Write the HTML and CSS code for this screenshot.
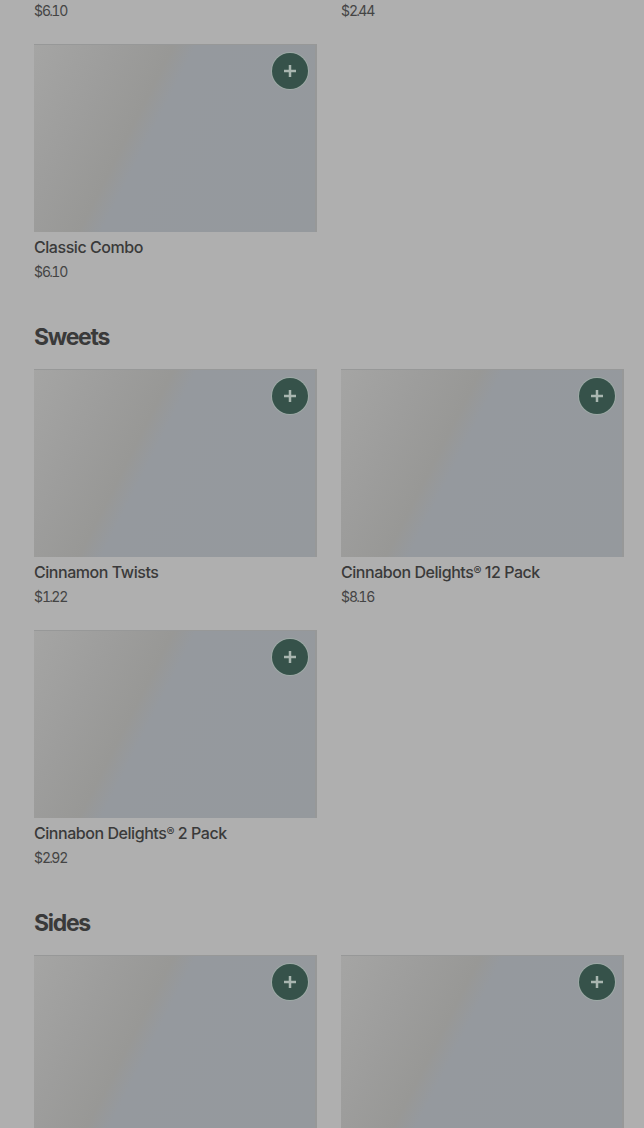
FILE: index.html
```html
<html lang="en">
<head>
  <meta charset="UTF-8" />
  <meta name="viewport" content="width=device-width, initial-scale=1.0" />
  <title>Menu</title>
  <link rel="stylesheet" href="styles.css">
</head>
<body>
  <main class="menu">
    <section>
      <div class="grid">
        <div class="item"><div class="price">$6<i>.</i>10</div></div>
        <div class="item"><div class="price">$2<i>.</i>44</div></div>
        <div class="item">
          <div class="photo"><button class="add" aria-label="Add"><svg viewBox="0 0 12 12"><path d="M6 0v12M0 6h12" /></svg></button></div>
          <div class="name">Classic Combo</div>
          <div class="price">$6<i>.</i>10</div>
        </div>
      </div>
    </section>

    <section>
      <h2>Sweets</h2>
      <div class="grid">
        <div class="item">
          <div class="photo"><button class="add" aria-label="Add"><svg viewBox="0 0 12 12"><path d="M6 0v12M0 6h12" /></svg></button></div>
          <div class="name">Cinnamon Twists</div>
          <div class="price">$1<i>.</i>22</div>
        </div>
        <div class="item">
          <div class="photo"><button class="add" aria-label="Add"><svg viewBox="0 0 12 12"><path d="M6 0v12M0 6h12" /></svg></button></div>
          <div class="name">Cinnabon Delights<sup>®</sup> 12 Pack</div>
          <div class="price">$8<i>.</i>16</div>
        </div>
        <div class="item">
          <div class="photo"><button class="add" aria-label="Add"><svg viewBox="0 0 12 12"><path d="M6 0v12M0 6h12" /></svg></button></div>
          <div class="name">Cinnabon Delights<sup>®</sup> 2 Pack</div>
          <div class="price">$2<i>.</i>92</div>
        </div>
      </div>
    </section>

    <section>
      <h2>Sides</h2>
      <div class="grid">
        <div class="item">
          <div class="photo"><button class="add" aria-label="Add"><svg viewBox="0 0 12 12"><path d="M6 0v12M0 6h12" /></svg></button></div>
        </div>
        <div class="item">
          <div class="photo"><button class="add" aria-label="Add"><svg viewBox="0 0 12 12"><path d="M6 0v12M0 6h12" /></svg></button></div>
        </div>
      </div>
    </section>
  </main>
</body>
</html>
```
FILE: styles.css
```css
:root {
  --bg: #afafaf;
  --text: #3a3a3a;
  --green: #36524a;
}

body {
  margin: 0;
  height: 1128px;
  overflow: hidden;
  background: var(--bg);
  color: var(--text);
  font-family: Inter, "Liberation Sans", sans-serif;
}

.menu {
  padding: 1px 20px 0 34px;
}

.grid {
  display: grid;
  grid-template-columns: 283px 283px;
  column-gap: 24px;
  row-gap: 23px;
}

h2 {
  margin: 40px 0 17px;
  font-size: 23px;
  line-height: 30px;
  font-weight: 700;
  letter-spacing: -1.3px;
}

.photo {
  display: flex;
  justify-content: flex-end;
  box-sizing: border-box;
  height: 188px;
  padding: 9px;
  margin-bottom: 3px;
  background: linear-gradient(117deg, #a5a5a4 0%, #9d9d9c 22%, #989896 37%, #95999e 43%, #95999d 100%);
  box-shadow: inset -2px 1px 0 #979898;
}

.add {
  display: flex;
  align-items: center;
  justify-content: center;
  width: 36px;
  height: 36px;
  padding: 0;
  border: none;
  border-radius: 50%;
  background: var(--green);
  box-shadow: 0 0 0 1px #9daaa6;
}

.add svg {
  width: 12px;
  height: 12px;
  fill: none;
  stroke: #a9b6b0;
  stroke-width: 2.5;
}

.name {
  font-size: 16px;
  line-height: 24px;
  font-weight: 500;
  letter-spacing: -0.45px;
  margin-bottom: 3px;
  white-space: nowrap;
}

.name sup {
  font-size: 12px;
  line-height: 0;
  vertical-align: 3px;
}

.price {
  font-size: 14px;
  line-height: 20px;
  letter-spacing: -1px;
  font-variant-numeric: tabular-nums;
  color: #444;
}

.price i {
  font-style: normal;
  margin: 0 -0.8px;
}
```
